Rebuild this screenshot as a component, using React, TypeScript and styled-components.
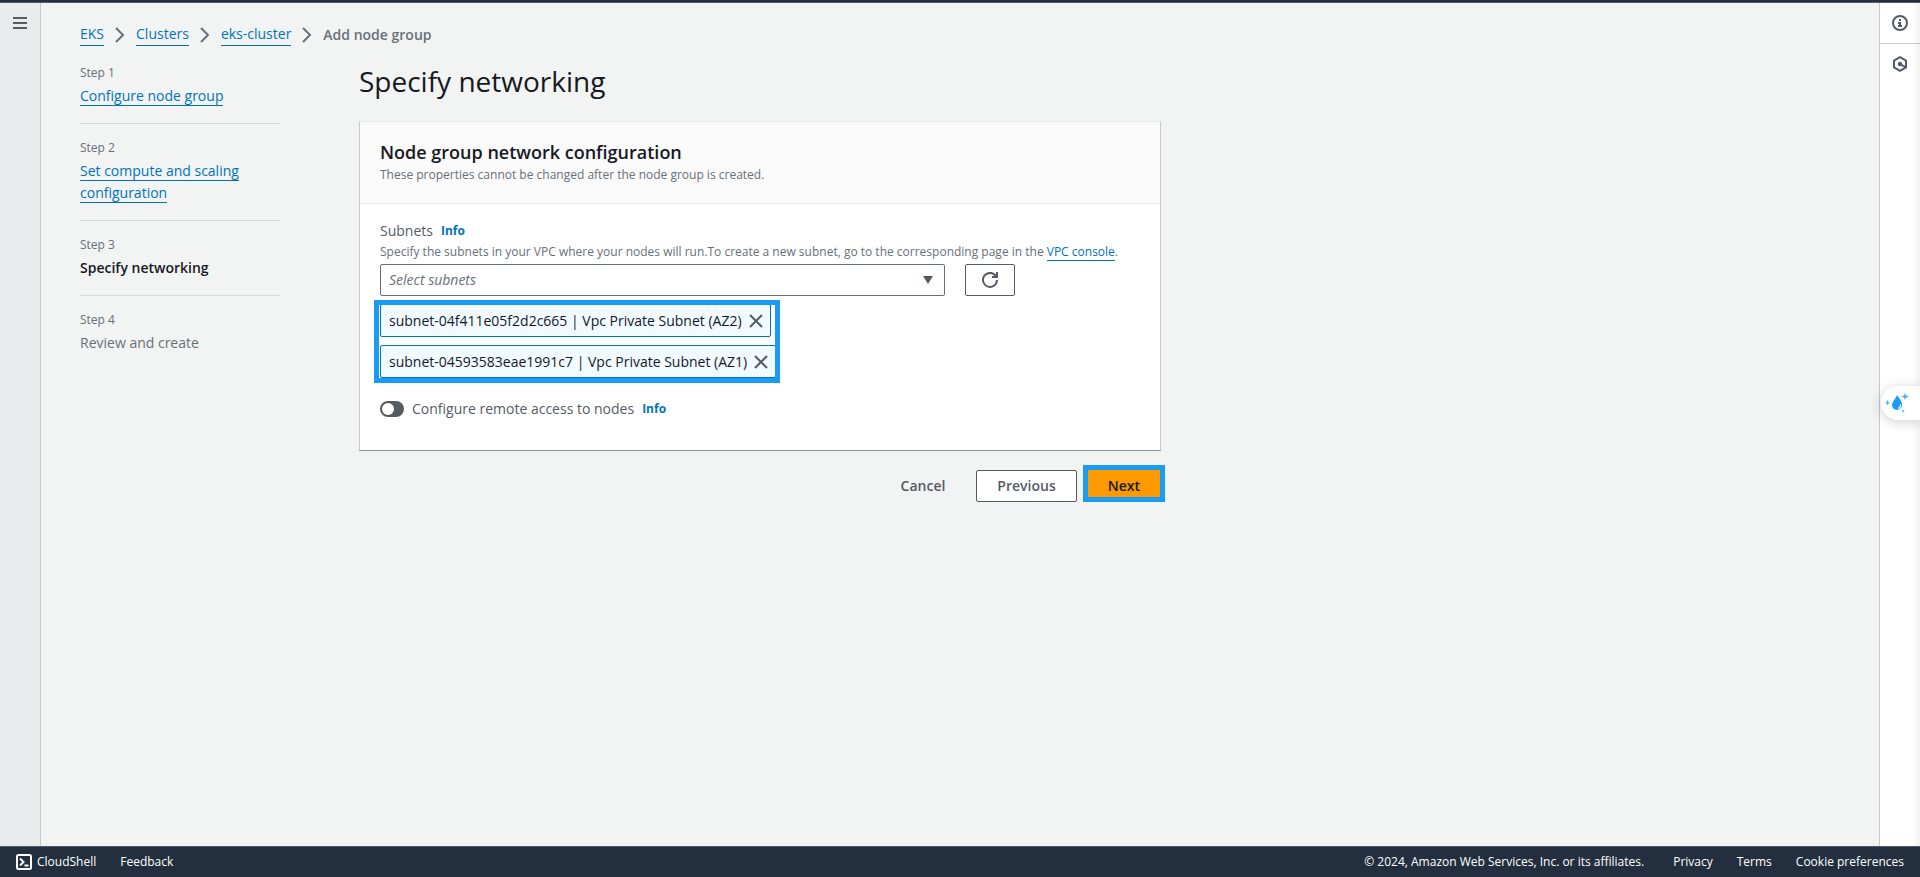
import React from 'react';
import styled, { createGlobalStyle, css } from 'styled-components';

const c = {
  ink: '#16191f',
  body: '#545b64',
  muted: '#687078',
  link: '#0073bb',
  line: '#d5dbdb',
  edge: '#c4caca',
  page: '#f2f3f3',
  chrome: '#232f3e',
  mark: '#1a9cf5',
};

const GlobalStyle = createGlobalStyle`
  *, *::before, *::after { box-sizing: border-box; }
  body {
    margin: 0;
    background: ${c.page};
    color: ${c.ink};
    font-family: "Open Sans", "Noto Sans", sans-serif;
    font-size: 14px;
    line-height: 22px;
  }
  button, select, input { font: inherit; }
  h1, h2, p, ol, ul { margin: 0; padding: 0; }
  ol, ul { list-style: none; }
`;

const Page = styled.div`
  min-height: 100vh;
  display: flex;
  flex-direction: column;
`;
const TopBar = styled.header`
  height: 3px;
  background: ${c.chrome};
  border-bottom: 1px solid #545b64;
`;
const Middle = styled.div`
  flex: 1;
  display: flex;
`;
const NavRail = styled.nav`
  flex: 0 0 41px;
  padding-top: 8px;
  background: #e9ecec;
  border-right: 1px solid ${c.edge};
`;
const ToolRail = styled.aside`
  flex: 0 0 41px;
  background: linear-gradient(to right, #fff 80%, #f1f1f1);
  border-left: 1px solid ${c.edge};
`;
const IconButton = styled.button`
  display: flex;
  align-items: center;
  justify-content: center;
  width: 40px;
  height: 24px;
  padding: 0;
  border: 0;
  background: none;
  color: ${c.body};
`;
const ToolButton = styled(IconButton)<{ $divided?: boolean }>`
  height: 40px;
  ${p => p.$divided && css`
    height: 41px;
    border-bottom: 1px solid ${c.edge};
  `}
`;
const Content = styled.main`
  flex: 1;
  padding: 20px 39px;
`;

const Crumbs = styled.ol`
  display: flex;
  align-items: center;
  gap: 10px;
`;
const Crumb = styled.li`
  display: flex;
  align-items: center;
  gap: 10px;
  color: ${c.muted};
`;
const Link = styled.a`
  color: ${c.link};
  text-decoration: none;
  border-bottom: 1px solid ${c.link};
`;
const Current = styled.span`
  font-weight: 600;
`;

const Columns = styled.div`
  display: grid;
  grid-template-columns: 200px minmax(0, 802px);
  column-gap: 79px;
  align-items: start;
`;
const Steps = styled.ol`
  padding-top: 4px;
`;
const Step = styled.li`
  padding: 14px 0 16px;
  border-bottom: 1px solid ${c.line};
  &:first-child { padding-top: 13px; }
  &:last-child { border-bottom: 0; }
`;
const StepNumber = styled.p`
  font-size: 12px;
  line-height: 20px;
  color: ${c.muted};
`;
const StepName = styled.p<{ $current?: boolean }>`
  margin-top: 2px;
  color: ${p => (p.$current ? c.ink : c.muted)};
  font-weight: ${p => (p.$current ? 600 : 400)};
`;

const Title = styled.h1`
  padding: 17px 0 22px;
  font-size: 28px;
  line-height: 36px;
  font-weight: 400;
`;
const Card = styled.section`
  background: #fff;
  border: 1px solid ${c.edge};
  border-top-color: #eaeded;
  border-bottom-color: #879596;
`;
const CardHead = styled.header`
  padding: 18px 20px;
  background: #fafafa;
  border-bottom: 1px solid #eaeded;
`;
const CardTitle = styled.h2`
  margin-bottom: 1px;
  font-size: 18px;
  line-height: 24px;
  font-weight: 600;
`;
const Hint = styled.p`
  font-size: 12px;
  line-height: 20px;
  color: ${c.muted};
`;
const CardBody = styled.div`
  padding: 16px 20px 30px;
`;
const LabelRow = styled.div`
  display: flex;
  align-items: center;
  gap: 8px;
  color: ${c.body};
`;
const Info = styled.a`
  font-size: 12px;
  font-weight: 700;
  color: ${c.link};
  text-decoration: none;
`;
const Picker = styled.div`
  display: flex;
  gap: 20px;
  margin-top: 2px;
`;
const SelectBox = styled.div`
  position: relative;
  flex: 0 1 565px;
  svg {
    position: absolute;
    right: 12px;
    top: 12px;
    pointer-events: none;
  }
`;
const Select = styled.select`
  display: block;
  width: 100%;
  height: 32px;
  padding: 0 32px 0 8px;
  appearance: none;
  border: 1px solid ${c.muted};
  border-radius: 2px;
  background: #fff;
  color: ${c.muted};
  font-style: italic;
`;
const Button = styled.button<{ $kind?: 'plain' | 'primary' }>`
  display: flex;
  align-items: center;
  justify-content: center;
  height: 32px;
  padding: 0 20px;
  border: 1px solid ${c.body};
  border-radius: 2px;
  background: #fff;
  color: ${c.body};
  font-weight: 600;
  ${p => p.$kind === 'plain' && css`
    border-color: transparent;
    background: none;
  `}
  ${p => p.$kind === 'primary' && css`
    border-color: #ff9900;
    background: #ff9900;
    color: ${c.ink};
  `}
`;
const RefreshButton = styled(Button)`
  width: 50px;
  padding: 0;
`;

const Chips = styled.ul`
  position: relative;
  display: flex;
  flex-direction: column;
  align-items: flex-start;
  gap: 8px;
  width: fit-content;
  margin-top: 8px;
  &::after {
    content: '';
    position: absolute;
    inset: -4px -4px -5px -6px;
    border: 5px solid ${c.mark};
    pointer-events: none;
  }
`;
const Chip = styled.li`
  display: flex;
  align-items: center;
  gap: 6px;
  height: 33px;
  padding: 0 6px 0 8px;
  border: 1px solid ${c.link};
  border-radius: 2px;
  background: #f1faff;
`;
const RemoveButton = styled(IconButton)`
  width: 16px;
  height: 16px;
`;
const ToggleRow = styled(LabelRow)`
  margin-top: 20px;
`;
const ToggleLabel = styled.label`
  display: flex;
  align-items: center;
  gap: 8px;
`;
const Toggle = styled.input`
  appearance: none;
  width: 24px;
  height: 16px;
  margin: 0;
  padding: 2px;
  border-radius: 8px;
  background: ${c.body};
  &::before {
    content: '';
    display: block;
    width: 12px;
    height: 12px;
    border-radius: 50%;
    background: #fff;
  }
  &:checked { background: ${c.link}; }
  &:checked::before { margin-left: 8px; }
`;
const Actions = styled.div`
  display: flex;
  justify-content: flex-end;
  gap: 10px;
  margin-top: 19px;
`;
const Marked = styled.div`
  position: relative;
  &::after {
    content: '';
    position: absolute;
    inset: -5px -4px 0;
    border: 5px solid ${c.mark};
    pointer-events: none;
  }
`;

const Assistant = styled.button`
  position: fixed;
  right: 0;
  top: 386px;
  width: 39px;
  height: 34px;
  padding: 0 0 0 4px;
  border: 0;
  border-radius: 17px 0 0 17px;
  background: #fff;
  box-shadow: 0 2px 12px rgba(0, 0, 0, 0.2);
  svg { display: block; }
`;

const Footer = styled.footer`
  display: flex;
  align-items: center;
  justify-content: space-between;
  height: 31px;
  padding: 0 16px;
  background: ${c.chrome};
  border-top: 1px solid #545b64;
  color: #fff;
  font-size: 12px;
`;
const FooterGroup = styled.div`
  display: flex;
  align-items: center;
  gap: 24px;
`;
const FooterButton = styled.button`
  display: flex;
  align-items: center;
  gap: 5px;
  padding: 0;
  border: 0;
  background: none;
  color: inherit;
`;
const FooterLink = styled.a`
  color: inherit;
  text-decoration: none;
`;
const Copyright = styled.span`
  margin-right: 5px;
`;

const Chevron = () => (
  <svg width="12" height="16" viewBox="0 0 12 16" fill="none" stroke="#687078" strokeWidth="2" aria-hidden="true">
    <path d="M2 1l7 7-7 7" />
  </svg>
);
const MenuIcon = () => (
  <svg width="16" height="16" viewBox="0 0 16 16" stroke="currentColor" strokeWidth="2" aria-hidden="true">
    <path d="M1 3h14M1 8h14M1 13h14" />
  </svg>
);
const InfoIcon = () => (
  <svg width="16" height="16" viewBox="0 0 16 16" fill="none" stroke="currentColor" strokeWidth="2" aria-hidden="true">
    <circle cx="8" cy="8" r="7" />
    <path d="M8 4v2M6 8h2v4M6 11h4" />
  </svg>
);
const HexIcon = () => (
  <svg width="16" height="16" viewBox="0 0 16 16" fill="none" stroke="currentColor" strokeWidth="2" aria-hidden="true">
    <path d="M8 1.2l6 3.4v6.8l-6 3.4-6-3.4V4.600z" />
    <path d="M8 8l5 2.800" />
    <circle cx="8" cy="8" r="1.200" fill="currentColor" />
  </svg>
);
const RefreshIcon = () => (
  <svg width="16" height="16" viewBox="0 0 16 16" fill="none" stroke="currentColor" strokeWidth="2" aria-hidden="true">
    <path d="M15 8a7 7 0 1 1-2-5l2 2" />
    <path d="M15 0v5h-5" />
  </svg>
);
const CloseIcon = () => (
  <svg width="16" height="16" viewBox="0 0 16 16" stroke="currentColor" strokeWidth="2" aria-hidden="true">
    <path d="M2 2l12 12M14 2L2 14" />
  </svg>
);
const ShellIcon = () => (
  <svg width="16" height="16" viewBox="0 0 16 16" fill="none" stroke="currentColor" strokeWidth="2" aria-hidden="true">
    <rect x="1" y="1" width="14" height="14" rx="1.500" />
    <path d="M4 4.500L7.500 8 4 11.500M8.500 11.500H12.500" />
  </svg>
);
const DropIcon = () => (
  <svg width="24" height="20" viewBox="0 0 24 20" fill="#1a9cf5" aria-hidden="true">
    <path d="M12 2c2 3 5 6 5 10a5 5 0 0 1-10 0c0-3 3-5 5-10z" />
    <path d="M20 0l1 2.500 3 1-3 1-1 2.500-1-2.500-3-1 3-1zM2.500 7l.8 2 1.700.7-1.700.8-.8 2-.8-2L0 9.700 1.700 9zM18 16l.6 1.400L20 18l-1.400.6L18 20l-.6-1.400L16 18l1.400-.6z" opacity=".8" />
    <path d="M15.500 11.500c.2 2-1 3.500-2.500 3.800" fill="none" stroke="#fff" strokeWidth="1.200" />
  </svg>
);

const crumbs = ['EKS', 'Clusters', 'eks-cluster'];
const steps = [
  { name: 'Configure node group', state: 'done' },
  { name: 'Set compute and scaling configuration', state: 'done' },
  { name: 'Specify networking', state: 'current' },
  { name: 'Review and create', state: 'next' },
];
const subnets = [
  'subnet-04f411e05f2d2c665 | Vpc Private Subnet (AZ2)',
  'subnet-04593583eae1991c7 | Vpc Private Subnet (AZ1)',
];

export default function App() {
  return (
    <Page>
      <GlobalStyle />
      <TopBar />
      <Middle>
        <NavRail>
          <IconButton aria-label="Open navigation"><MenuIcon /></IconButton>
        </NavRail>
        <Content>
          <Crumbs>
            {crumbs.map(name => (
              <Crumb key={name}><Link href="#">{name}</Link><Chevron /></Crumb>
            ))}
            <Crumb><Current>Add node group</Current></Crumb>
          </Crumbs>
          <Columns>
            <Steps>
              {steps.map((step, i) => (
                <Step key={step.name}>
                  <StepNumber>Step {i + 1}</StepNumber>
                  <StepName $current={step.state === 'current'}>
                    {step.state === 'done' ? <Link href="#">{step.name}</Link> : step.name}
                  </StepName>
                </Step>
              ))}
            </Steps>
            <div>
              <Title>Specify networking</Title>
              <Card>
                <CardHead>
                  <CardTitle>Node group network configuration</CardTitle>
                  <Hint>These properties cannot be changed after the node group is created.</Hint>
                </CardHead>
                <CardBody>
                  <LabelRow>
                    <label htmlFor="subnets">Subnets</label>
                    <Info href="#">Info</Info>
                  </LabelRow>
                  <Hint>
                    Specify the subnets in your VPC where your nodes will run.To create a new subnet, go to the
                    corresponding page in the <Link href="#">VPC console</Link>.
                  </Hint>
                  <Picker>
                    <SelectBox>
                      <Select id="subnets" defaultValue="">
                        <option value="">Select subnets</option>
                      </Select>
                      <svg width="10" height="8" viewBox="0 0 10 8" fill="#545b64" aria-hidden="true">
                        <path d="M0 0h10L5 8z" />
                      </svg>
                    </SelectBox>
                    <RefreshButton aria-label="Refresh subnets"><RefreshIcon /></RefreshButton>
                  </Picker>
                  <Chips>
                    {subnets.map(name => (
                      <Chip key={name}>
                        {name}
                        <RemoveButton aria-label={`Remove ${name}`}><CloseIcon /></RemoveButton>
                      </Chip>
                    ))}
                  </Chips>
                  <ToggleRow>
                    <ToggleLabel>
                      <Toggle type="checkbox" role="switch" />
                      Configure remote access to nodes
                    </ToggleLabel>
                    <Info href="#">Info</Info>
                  </ToggleRow>
                </CardBody>
              </Card>
              <Actions>
                <Button $kind="plain">Cancel</Button>
                <Button>Previous</Button>
                <Marked><Button $kind="primary">Next</Button></Marked>
              </Actions>
            </div>
          </Columns>
        </Content>
        <ToolRail>
          <ToolButton $divided aria-label="Info panel"><InfoIcon /></ToolButton>
          <ToolButton aria-label="Resources panel"><HexIcon /></ToolButton>
        </ToolRail>
      </Middle>
      <Footer>
        <FooterGroup>
          <FooterButton><ShellIcon />CloudShell</FooterButton>
          <FooterLink href="#">Feedback</FooterLink>
        </FooterGroup>
        <FooterGroup>
          <Copyright>© 2024, Amazon Web Services, Inc. or its affiliates.</Copyright>
          <FooterLink href="#">Privacy</FooterLink>
          <FooterLink href="#">Terms</FooterLink>
          <FooterLink href="#">Cookie preferences</FooterLink>
        </FooterGroup>
      </Footer>
      <Assistant aria-label="Open assistant"><DropIcon /></Assistant>
    </Page>
  );
}
